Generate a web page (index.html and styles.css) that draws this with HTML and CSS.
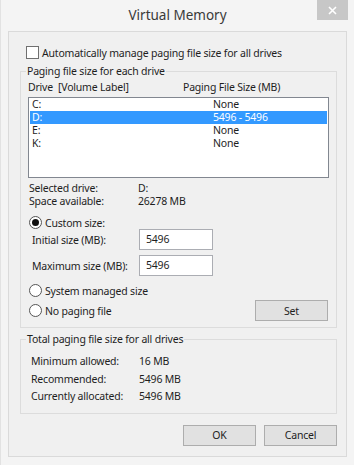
FILE: index.html
```html
<!DOCTYPE html>
<html lang="en">
<head>
    <meta charset="UTF-8">
    <title>Virtual Memory</title>
    <link rel="stylesheet" href="styles.css">
</head>
<body>
    <div class="window">
        <div class="titlebar">
            <span></span>
            <span class="title">Virtual Memory</span>
            <span class="close">
                <svg width="9" height="9" viewBox="0 0 9 9"><path d="M1 1 L8 8 M8 1 L1 8" stroke="#fff" stroke-width="1.6"/></svg>
            </span>
        </div>
        <div class="client">
            <div class="auto-row">
                <span class="checkbox"></span>
                <span>Automatically manage paging file size for all drives</span>
            </div>

            <fieldset class="group group-drives">
                <legend>Paging file size for each drive</legend>
                <div class="list-head">
                    <span class="col-drive">Drive&nbsp;&nbsp;[Volume Label]</span>
                    <span>Paging File Size (MB)</span>
                </div>
                <div class="listbox">
                    <div class="list-row"><span class="col-drive">C:</span><span>None</span></div>
                    <div class="list-row selected"><span class="col-drive">D:</span><span>5496 - 5496</span></div>
                    <div class="list-row"><span class="col-drive">E:</span><span>None</span></div>
                    <div class="list-row"><span class="col-drive">K:</span><span>None</span></div>
                </div>
                <div class="info">
                    <span>Selected drive:</span><span>D:</span>
                    <span>Space available:</span><span>26278 MB</span>
                </div>
                <div class="radio-row custom">
                    <span class="radio checked"></span>
                    <span>Custom size:</span>
                </div>
                <div class="size-row">
                    <span>Initial size (MB):</span>
                    <span class="textbox">5496</span>
                </div>
                <div class="size-row">
                    <span>Maximum size (MB):</span>
                    <span class="textbox">5496</span>
                </div>
                <div class="radio-row system">
                    <span class="radio"></span>
                    <span>System managed size</span>
                </div>
                <div class="set-row">
                    <div class="radio-row">
                        <span class="radio"></span>
                        <span>No paging file</span>
                    </div>
                    <button class="btn">Set</button>
                </div>
            </fieldset>

            <fieldset class="group group-total">
                <legend>Total paging file size for all drives</legend>
                <div class="totals">
                    <span>Minimum allowed:</span><span>16 MB</span>
                    <span>Recommended:</span><span>5496 MB</span>
                    <span>Currently allocated:</span><span>5496 MB</span>
                </div>
            </fieldset>

            <div class="actions">
                <button class="btn">OK</button>
                <button class="btn">Cancel</button>
            </div>
        </div>
    </div>
</body>
</html>
```

FILE: styles.css
```css
body {
    margin: 0;
    font-family: "Noto Sans", "Open Sans", sans-serif;
    font-size: 10.5px;
    letter-spacing: -0.2px;
    color: #1e1e1e;
    background: #f4f4f4;
}
.window {
    width: 354px;
    height: 465px;
    box-sizing: border-box;
    background: #f4f4f4;
    border-left: 1px solid #e2e2e2;
}
.titlebar {
    height: 31px;
    display: grid;
    grid-template-columns: 1fr auto 1fr;
}
.title {
    font-size: 13.5px;
    letter-spacing: 0;
    color: #3a3a3a;
    line-height: 31px;
}
.close {
    justify-self: end;
    width: 31px;
    height: 20px;
    margin-right: 6px;
    background: #c7c7c7;
    display: flex;
    align-items: center;
    justify-content: center;
}
.client {
    margin: 0 7px 0 7px;
    height: 426px;
    box-sizing: border-box;
    border: 1px solid #dadada;
    background: #f0f0f0;
}
.auto-row {
    display: flex;
    align-items: center;
    gap: 3px;
    margin: 14px 0 0 17px;
    height: 13px;
}
.checkbox {
    width: 11px;
    height: 11px;
    border: 1px solid #707070;
    background: #fff;
}
.group {
    margin: 5px 9px 0 11px;
    padding: 0 7px;
    border: 1px solid #dcdcdc;
    min-width: 0;
}
.group legend {
    padding: 0 1px;
    margin-left: -2px;
    line-height: 15px;
}
.list-head {
    display: flex;
    height: 13px;
    line-height: 13px;
    margin-top: 2px;
}
.col-drive {
    width: 155px;
}
.listbox {
    margin-top: 3px;
    height: 81px;
    box-sizing: border-box;
    border: 1px solid #828790;
    background: #fff;
    padding: 0 1px;
}
.list-row {
    display: flex;
    height: 13px;
    line-height: 13px;
    padding-left: 2px;
}
.list-row .col-drive {
    width: 181px;
}
.list-row.selected {
    background: #3399ff;
    color: #fff;
}
.info {
    display: grid;
    grid-template-columns: 109px auto;
    line-height: 13px;
    margin-top: 4px;
    padding-left: 1px;
}
.radio-row {
    display: flex;
    align-items: center;
    gap: 3px;
    height: 13px;
    padding-left: 1px;
}
.radio-row.custom {
    margin-top: 8px;
}
.radio-row.system {
    margin-top: 8px;
}
.radio {
    width: 11px;
    height: 11px;
    border: 1px solid #555;
    border-radius: 50%;
    background: #fff;
    display: flex;
    align-items: center;
    justify-content: center;
}
.radio.checked::after {
    content: "";
    width: 7px;
    height: 7px;
    border-radius: 50%;
    background: #111;
}
.size-row {
    display: flex;
    align-items: center;
    padding-left: 4px;
    height: 21px;
    margin-bottom: 5px;
}
.size-row span:first-child {
    width: 107px;
}
.textbox {
    width: 74px;
    height: 21px;
    box-sizing: border-box;
    border: 1px solid #abadb3;
    background: #fff;
    padding: 2px 0 0 6px;
    line-height: 15px;
}
.size-row + .size-row {
    margin-bottom: 0;
}
.set-row {
    display: flex;
    align-items: center;
    justify-content: space-between;
    margin-top: 3px;
    padding-bottom: 6px;
}
.btn {
    width: 73px;
    height: 21px;
    font: inherit;
    letter-spacing: inherit;
    color: #1e1e1e;
    background: #e1e1e1;
    border: 1px solid #adadad;
    padding: 0;
}
.set-row .btn {
    margin-right: 1px;
}
.group-total {
    margin-top: 4px;
}
.totals {
    display: grid;
    grid-template-columns: 108px auto;
    line-height: 17.5px;
    margin-top: 6px;
    padding-left: 3px;
    padding-bottom: 7px;
}
.actions {
    display: flex;
    justify-content: flex-end;
    gap: 8px;
    margin: 11px 9px 0 0;
}
```
